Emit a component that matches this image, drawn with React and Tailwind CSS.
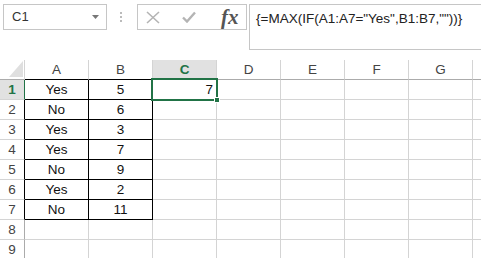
import React from 'react';

const cols = ['A', 'B', 'C', 'D', 'E', 'F', 'G', 'H'];
const data = [
    ['Yes', '5'],
    ['No', '6'],
    ['Yes', '3'],
    ['Yes', '7'],
    ['No', '9'],
    ['Yes', '2'],
    ['No', '11'],
];

const HeaderRow = () => (
    <div className="flex h-[20px]">
        {/* corner */}
        <div className="relative w-[25px] shrink-0 border-r border-b border-[#d4d4d4] border-b-[#ababab]">
            <svg className="absolute left-[9px] top-[1px]" width="14" height="16" viewBox="0 0 14 16">
                <polygon points="14,0 14,16 0,16" fill="#dfdfdf" />
            </svg>
        </div>
        {cols.map((c) => {
            const selected = c === 'C';
            const inTable = c === 'A' || c === 'B';
            return (
                <div
                    key={c}
                    className={
                        'w-[64px] shrink-0 flex items-center justify-center border-r border-b border-r-[#d4d4d4] ' +
                        (inTable ? 'border-b-black ' : 'border-b-[#ababab] ') +
                        (selected ? 'bg-[#e1e1e1] text-[#217346] font-bold' : 'text-[#444]')
                    }
                >
                    {/* H sits past the window edge, its letter is never seen */}
                    {c === 'H' ? '' : c}
                </div>
            );
        })}
    </div>
);

const Row = ({ n }) => {
    const row = data[n - 1];
    const selected = n === 1;
    return (
        <div className="flex h-[20px]">
            <div
                className={
                    'w-[25px] shrink-0 flex items-center justify-center border-r border-b border-b-[#d4d4d4] ' +
                    (selected
                        ? 'bg-[#e1e1e1] text-[#217346] font-bold border-r-[#217346]'
                        : row
                        ? 'text-[#444] border-r-black'
                        : 'text-[#444] border-r-[#ababab]')
                }
            >
                {n}
            </div>
            {cols.map((c, i) => {
                const inTable = row && i < 2;
                return (
                    <div
                        key={c}
                        className={
                            'w-[64px] shrink-0 flex items-center pt-[1px] border-r border-b ' +
                            (inTable ? 'border-black justify-center ' : 'border-[#d4d4d4] justify-end pr-[3px] ')
                        }
                    >
                        {inTable ? row[i] : n === 1 && c === 'C' ? '7' : ''}
                    </div>
                );
            })}
        </div>
    );
};

export default function App() {
    return (
        <div className="relative w-[481px] h-[258px] overflow-hidden bg-white text-[#111] font-['Liberation_Sans',sans-serif] text-[13.5px]">
            {/* formula bar */}
            <div className="flex items-start h-[60px] pt-[4px] pl-[3px]">
                <div className="w-[104px] h-[26px] shrink-0 border border-[#c6c6c6] flex items-center justify-between pl-[8px] pr-[7px] text-[13px] text-[#333]">
                    <span>C1</span>
                    <svg width="7" height="4" viewBox="0 0 7 4">
                        <polygon points="0,0 7,0 3.5,4" fill="#777" />
                    </svg>
                </div>
                <div className="w-[30px] h-[26px] shrink-0 flex flex-col items-center justify-center gap-[2px] pr-[2px]">
                    <span className="w-[2px] h-[2px] bg-[#bbb]" />
                    <span className="w-[2px] h-[2px] bg-[#bbb]" />
                    <span className="w-[2px] h-[2px] bg-[#bbb]" />
                </div>
                <div className="w-[110px] h-[26px] shrink-0 border border-[#c6c6c6] flex items-center pl-[8px]">
                    <svg width="14" height="13" viewBox="0 0 14 13">
                        <path d="M1 1 L13 12 M13 1 L1 12" stroke="#b4b4b4" strokeWidth="1.6" fill="none" />
                    </svg>
                    <svg width="14" height="12" viewBox="0 0 14 12" className="ml-[22px]">
                        <path d="M1 6.5 L5 10.5 L13 1.5" stroke="#b4b4b4" strokeWidth="2.4" fill="none" />
                    </svg>
                    <span className="ml-[25px] font-['Liberation_Serif',serif] italic font-bold text-[21px] text-[#555] leading-none">
                        fx
                    </span>
                </div>
                <div className="ml-[2px] flex-1 h-[46px] border border-[#c6c6c6] border-r-0 pl-[6px] pt-[5px] text-[13.5px] text-[#222] leading-[18px]">
                    {'{=MAX(IF(A1:A7="Yes",B1:B7,""))}'}
                </div>
            </div>

            {/* grid */}
            <div className="leading-none">
                <HeaderRow />
                {[1, 2, 3, 4, 5, 6, 7, 8, 9].map((n) => (
                    <Row key={n} n={n} />
                ))}
            </div>

            {/* selection overlay */}
            <div className="absolute left-[151px] top-[78px] w-[67px] h-[23px] border-2 border-[#217346]" />
            <div className="absolute left-[214px] top-[97px] w-[6px] h-[6px] bg-[#217346] border border-white" />
        </div>
    );
}
